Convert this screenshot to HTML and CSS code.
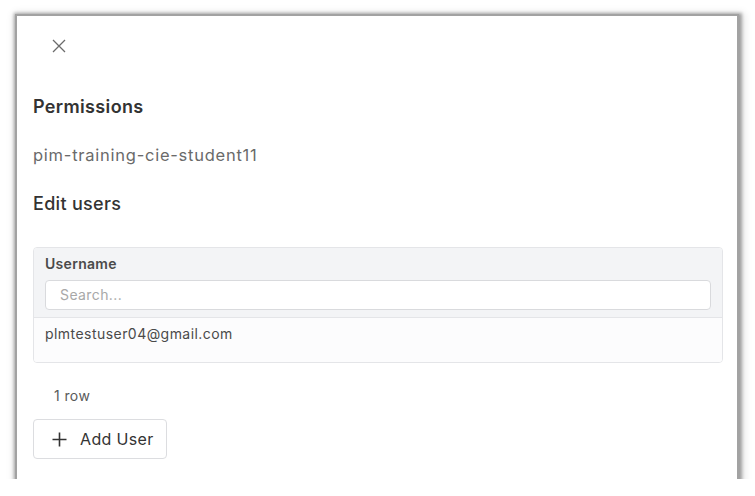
FILE: index.html
```html
<!DOCTYPE html>
<html>
<head>
<meta charset="utf-8">
<link rel="stylesheet" href="styles.css">
</head>
<body>
<div class="panel">
  <button class="close" aria-label="Close">
    <svg width="14" height="14" viewBox="0 0 14 14"><path d="M1 1L13 13M13 1L1 13" stroke="#6b6b6b" stroke-width="1.3" fill="none"/></svg>
  </button>
  <h2 class="title">Permissions</h2>
  <div class="name">pim-training-cie-student11</div>
  <h3 class="subtitle">Edit users</h3>
  <div class="table">
    <div class="thead">
      <div class="th">Username</div>
      <div class="search">Search...</div>
    </div>
    <div class="row">plmtestuser04@gmail.com</div>
  </div>
  <div class="count">1 row</div>
  <button class="add">
    <svg width="15" height="15" viewBox="0 0 15 15"><path d="M7.5 0.5V14.5M0.5 7.5H14.5" stroke="#333" stroke-width="1.6" fill="none"/></svg>
    <span>Add User</span>
  </button>
</div>
</body>
</html>
```
FILE: styles.css
```css
* { box-sizing: border-box; }
html, body { margin: 0; padding: 0; background: #fff; }
body {
  font-family: Inter, "Noto Sans", sans-serif;
  color: #333;
  padding: 16px 0 0 17px;
}
.panel {
  width: 720px;
  height: 463px;
  background: #fff;
  padding: 14px 14px 0 16px;
  box-shadow: 0 0 0 2px #a2a2a2, 1px 1px 3px 4px rgba(0,0,0,0.3), 2px 2px 8px 5px rgba(0,0,0,0.12);
  display: flex;
  flex-direction: column;
  align-items: flex-start;
}
.close {
  width: 32px;
  height: 32px;
  margin-left: 10px;
  border: none;
  background: none;
  padding: 0;
  display: flex;
  align-items: center;
  justify-content: center;
}
.title {
  margin: 33px 0 0;
  font-size: 18px;
  line-height: 24px;
  font-weight: 600;
  letter-spacing: 0.35px;
  color: #333;
}
.name {
  margin-top: 24px;
  font-size: 16.5px;
  line-height: 24px;
  letter-spacing: 0.75px;
  color: #6a6a6a;
}
.subtitle {
  margin: 25px 0 0;
  font-size: 18px;
  line-height: 24px;
  font-weight: 500;
  letter-spacing: 0.3px;
  color: #333;
}
.table {
  margin-top: 31px;
  width: 690px;
  border: 1px solid #e4e5e8;
  border-radius: 4px;
  overflow: hidden;
}
.thead {
  background: #f3f4f6;
  padding: 6px 11px 7px 11px;
  border-bottom: 1px solid #e4e5e8;
}
.th {
  font-size: 14px;
  line-height: 20px;
  font-weight: 600;
  letter-spacing: 0.3px;
  color: #4a4a4a;
}
.search {
  margin-top: 6px;
  height: 30px;
  background: #fff;
  border: 1px solid #d9dadd;
  border-radius: 4px;
  padding: 0 14px;
  font-size: 14px;
  line-height: 28px;
  letter-spacing: 0.4px;
  color: #a8a8a8;
}
.row {
  background: #fcfcfd;
  padding: 6px 11px 18px;
  font-size: 14px;
  line-height: 20px;
  letter-spacing: 0.45px;
  color: #4a4a4a;
}
.count {
  margin: 23px 0 0 21px;
  font-size: 14px;
  line-height: 20px;
  letter-spacing: 0.4px;
  color: #5a5a5a;
}
.add {
  margin-top: 13px;
  width: 134px;
  height: 40px;
  border: 1px solid #dcdde0;
  border-radius: 4px;
  background: #fff;
  display: flex;
  align-items: center;
  gap: 13px;
  padding: 0 0 0 18px;
  font-family: Inter, "Noto Sans", sans-serif;
  font-size: 16px;
  letter-spacing: 0.35px;
  color: #333;
}
```
